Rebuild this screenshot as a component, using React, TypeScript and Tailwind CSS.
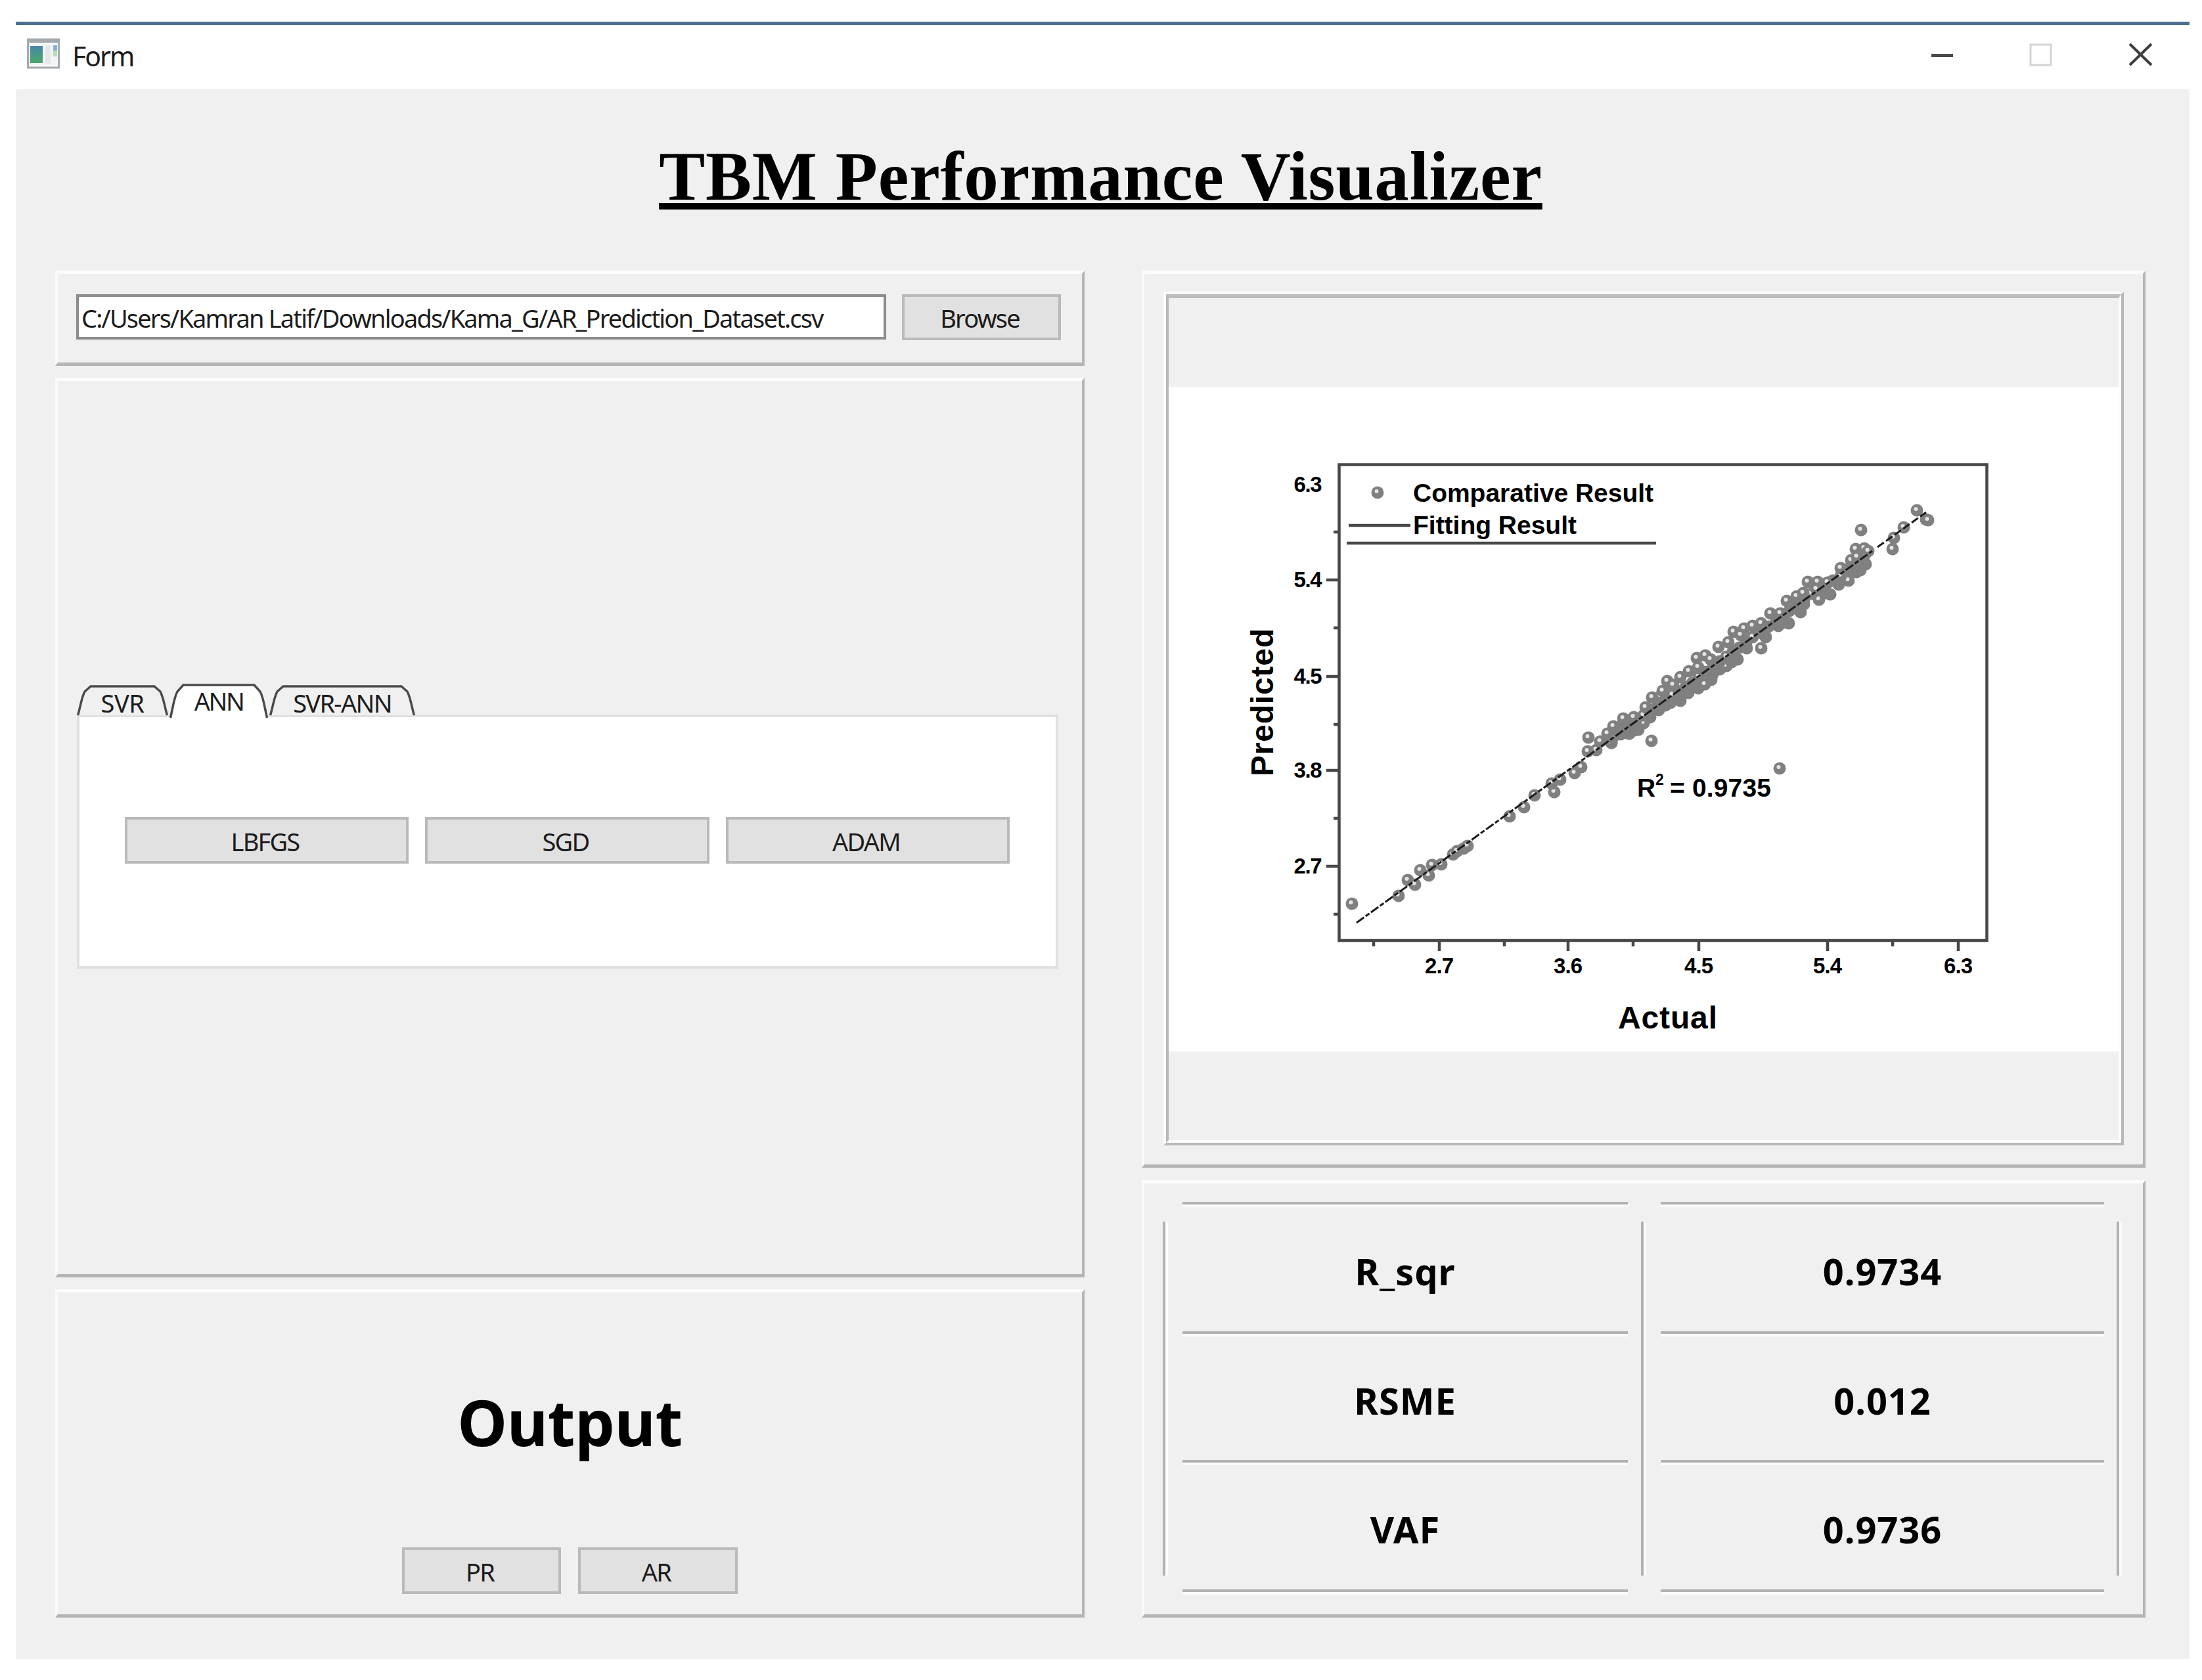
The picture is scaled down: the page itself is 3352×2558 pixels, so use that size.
import type { ReactNode } from "react";

const UI_FONT = "font-['Noto_Sans',sans-serif]";

function Panel({ className = "", children }: { className?: string; children?: ReactNode }) {
  return (
    <section
      className={`border-4 border-t-[5px] border-b-[5px] border-t-[#fcfcfc] border-l-[#fafafa] border-r-[#b4b4b4] border-b-[#b4b4b4] ${className}`}
    >
      {children}
    </section>
  );
}

function PushButton({ className = "", children }: { className?: string; children: ReactNode }) {
  return (
    <button
      className={`flex items-center justify-center border-4 border-[#bababa] bg-[#e1e1e1] pt-[2px] pr-[5px] text-[38px] leading-none tracking-[-1.8px] text-[#1c1c1c] ${className}`}
    >
      {children}
    </button>
  );
}

function Tab({ width, active = false, label, spacing }: { width: number; active?: boolean; label: string; spacing: string }) {
  const top = active ? 3 : 5;
  const bottom = active ? 53 : 49;
  const w = width;
  return (
    <div className="relative flex h-[52px] items-center justify-center" style={{ width }}>
      <svg className="absolute left-0 top-0 overflow-visible" width={w} height="54">
        <path
          d={`M1.5 ${bottom} C5 38 7 22 12 13 L21 ${top} H${w - 21} L${w - 12} 13 C${w - 7} 22 ${w - 5} 38 ${w - 1.5} ${bottom}`}
          fill={active ? "#ffffff" : "#f0f0f0"}
          stroke="#4a4a4a"
          strokeWidth="3.5"
        />
      </svg>
      <span className={`relative text-[38px] leading-none text-[#1c1c1c] ${spacing} ${active ? "pt-[1px]" : "pt-[7px]"}`}>{label}</span>
    </div>
  );
}

const POINTS: [number, number][] = [
  [2058, 1376], [2129, 1364], [2143, 1340], [2154, 1347], [2162, 1325], [2175, 1333], [2180, 1317], [2194, 1316],
  [2212, 1301], [2218, 1296], [2228, 1292], [2234, 1288], [2298, 1243], [2320, 1229], [2336, 1211], [2366, 1206],
  [2362, 1193], [2375, 1187], [2397, 1177], [2407, 1168], [2417, 1144], [2430, 1142], [2436, 1129], [2418, 1123],
  [2453, 1131], [2455, 1119], [2470, 1116], [2480, 1117], [2463, 1108], [2472, 1098], [2488, 1112],
  [2514, 1128], [2709, 1170], [2833, 807], [2881, 836], [2883, 819], [2898, 803], [2918, 777], [2932, 791], [2935, 792],
];

/* Lower and middle strands are painted first so the upper strand's highlights stay visible. */
const LOWER: [number, number][] = [
  [2453, 1131], [2467, 1118], [2480, 1117], [2494, 1111], [2502, 1101], [2512, 1092], [2525, 1081], [2535, 1074],
  [2543, 1070], [2558, 1067], [2570, 1055], [2585, 1048], [2595, 1042], [2605, 1035], [2607, 1027], [2618, 1019],
  [2628, 1014], [2636, 1008], [2645, 1004], [2659, 987], [2681, 987], [2688, 970], [2685, 966], [2707, 953],
  [2714, 948], [2723, 949], [2741, 932], [2746, 920], [2769, 913], [2779, 903], [2786, 905], [2799, 890],
  [2814, 884], [2826, 871], [2832, 868], [2840, 859],
];

const MIDDLE: [number, number][] = [
  [2455, 1123], [2466, 1114], [2478, 1106], [2490, 1098], [2502, 1089], [2514, 1081], [2524, 1074], [2536, 1065],
  [2546, 1058], [2556, 1053], [2566, 1046], [2576, 1040], [2586, 1031], [2596, 1023], [2608, 1014], [2618, 1007],
  [2628, 1000], [2638, 992], [2648, 986], [2658, 978], [2668, 970], [2680, 961], [2692, 954], [2704, 945],
  [2714, 939], [2724, 930], [2734, 922], [2746, 914], [2758, 904], [2768, 897], [2780, 889], [2790, 884],
  [2802, 877], [2812, 867], [2822, 859], [2832, 851], [2839, 844],
];

const UPPER: [number, number][] = [
  [2447, 1117], [2456, 1106], [2471, 1094], [2487, 1092], [2505, 1077], [2515, 1062], [2528, 1060], [2531, 1052],
  [2538, 1037], [2547, 1043], [2558, 1031], [2571, 1022], [2583, 1002], [2596, 998], [2585, 1016], [2616, 985],
  [2604, 1004], [2631, 978], [2639, 962], [2655, 957], [2650, 967], [2668, 953], [2681, 949], [2695, 934],
  [2710, 934], [2720, 915], [2735, 908], [2745, 903], [2752, 886], [2767, 886], [2765, 897], [2782, 887],
  [2802, 865], [2818, 853], [2825, 836], [2838, 835], [2844, 839], [2827, 848],
];

function Sphere({ x, y, shine = true }: { x: number; y: number; shine?: boolean }) {
  return (
    <g>
      <circle cx={x} cy={y} r="9.5" fill="#808080" />
      {shine && <circle cx={x - 1.5} cy={y - 2} r="3" fill="#e4e4e4" />}
    </g>
  );
}

const X_TICKS: [number, string][] = [[2191, "2.7"], [2387, "3.6"], [2586, "4.5"], [2782, "5.4"], [2981, "6.3"]];
const Y_TICKS: [number, string][] = [[883, "5.4"], [1030, "4.5"], [1173, "3.8"], [1319, "2.7"]];

function ScatterChart() {
  return (
    <svg
      viewBox="1779 589 1446 1012"
      width="1446"
      height="1012"
      className="block bg-white font-['Liberation_Sans',Arial,sans-serif] font-bold"
    >
      <g stroke="#484848" strokeWidth="4.5" fill="none">
        <rect x="2038.5" y="707.5" width="986" height="724.5" />
        {Y_TICKS.map(([y]) => <path key={y} d={`M2019 ${y}H2038`} />)}
        {[810, 956, 1103, 1246, 1392].map((y) => <path key={y} d={`M2030 ${y}H2038`} />)}
        {X_TICKS.map(([x]) => <path key={x} d={`M${x} 1432V1448`} />)}
        {[2091, 2290, 2486, 2881].map((x) => <path key={x} d={`M${x} 1432V1441`} />)}
        <path d="M2053 800H2147" />
        <path d="M2050 827H2521" />
      </g>
      <g fontSize="33" textAnchor="middle">
        {X_TICKS.map(([x, t]) => <text key={t} x={x} y="1482" textLength="44">{t}</text>)}
        <text x="1991" y="749" textLength="43">6.3</text>
        {Y_TICKS.map(([y, t]) => <text key={t} x="1991" y={y + 11} textLength="43">{t}</text>)}
      </g>
      <g fontSize="39">
        <text x="2151" y="764" textLength="366">Comparative Result</text>
        <text x="2151" y="813" textLength="249">Fitting Result</text>
        <text x="2492" y="1213">R</text>
        <text x="2520" y="1195" fontSize="23">2</text>
        <text x="2542" y="1213" textLength="154">= 0.9735</text>
      </g>
      <g fontSize="48">
        <text x="2463" y="1566" textLength="151">Actual</text>
        <text transform="translate(1938 1182) rotate(-90)" textLength="225">Predicted</text>
      </g>
      <Sphere x={2097} y={750} />
      {POINTS.map(([x, y], i) => <Sphere key={i} x={x} y={y} />)}
      {[...LOWER, ...MIDDLE].map(([x, y], i) => <Sphere key={i} x={x} y={y} shine={i % 4 === 0} />)}
      {UPPER.map(([x, y], i) => <Sphere key={i} x={x} y={y} />)}
      <path d="M2065 1405L2850 839" stroke="#1c1c1c" strokeWidth="3" strokeDasharray="14 3 7 3" />
      <path d="M2858 833L2932 780" stroke="#1c1c1c" strokeWidth="3" strokeDasharray="12 4" />
    </svg>
  );
}

function HRule() {
  return <div className="h-2 border-t-4 border-b-4 border-t-[#b2b2b2] border-b-[#fbfbfb]" />;
}

function VRule() {
  return <div className="mt-[30px] h-[539px] w-2 border-l-4 border-r-4 border-l-[#b2b2b2] border-r-[#fbfbfb]" />;
}

function MetricColumn({ values, className }: { values: string[]; className: string }) {
  return (
    <div className={`flex flex-col ${className}`}>
      <HRule />
      {values.map((v) => (
        <div key={v}>
          <div className="flex h-[188.5px] items-center justify-center pt-[6px] text-[56px] font-bold leading-none tracking-[0.9px]">{v}</div>
          <HRule />
        </div>
      ))}
    </div>
  );
}

function TitleBar() {
  return (
    <header className="flex h-[103px] items-start border-t-[5px] border-[#4d7090] bg-white">
      <svg className="ml-[17px] mt-[20px]" width="50" height="47" viewBox="0 0 50 47">
        <defs>
          <linearGradient id="pane" x1="0" y1="0" x2="0" y2="1">
            <stop offset="0" stopColor="#4a86a8" />
            <stop offset="1" stopColor="#48a868" />
          </linearGradient>
        </defs>
        <rect x="1.5" y="2" width="47" height="43" fill="#f4f5f6" stroke="#a4a9ad" strokeWidth="3" />
        <rect x="1" y="1" width="48" height="6" fill="#a4a9ad" />
        <rect x="5" y="12" width="19" height="26" fill="url(#pane)" />
        <rect x="28" y="11" width="8" height="28" fill="#e6e6e8" />
        <rect x="40" y="11" width="6" height="8" fill="#86b0d8" />
        <rect x="40" y="19" width="6" height="9" fill="#b6dfb2" />
      </svg>
      <span className="ml-[19px] mt-[27px] text-[41px] leading-none tracking-[-2px] text-[#1c1c1c]">Form</span>
      <svg className="ml-auto mr-[56px] mt-[25px]" width="338" height="40" viewBox="0 0 338 40" fill="none">
        <path d="M1 21.5H34" stroke="#4a4a4a" strokeWidth="5" />
        <rect x="152" y="5" width="31" height="31" stroke="#d4d4d4" strokeWidth="3" />
        <path d="M303 4L336 36M336 4L303 36" stroke="#3c3c3c" strokeWidth="4" />
      </svg>
    </header>
  );
}

export default function App() {
  return (
    <div className={`h-[2558px] w-[3352px] bg-white pl-6 pt-[33px] text-black ${UI_FONT}`}>
      <div className="h-[2493px] w-[3309px] bg-[#f0f0f0]">
        <TitleBar />
        <h1 className="flex h-[262px] items-center justify-center pr-[6px] pt-[2px] font-['Liberation_Serif',serif] text-[105px] font-bold leading-none tracking-[0.8px] underline decoration-[10px] underline-offset-[5px] [text-decoration-skip-ink:none]">
          TBM Performance Visualizer
        </h1>
        <main className="mt-[14px] flex gap-[87px] pl-[60px]">
          <div className="flex w-[1567px] flex-col gap-[18px]">
            <Panel className="flex h-[145px] gap-6 pl-7 pt-[31px]">
              <div className="flex h-[69px] w-[1233px] items-center whitespace-nowrap border-4 border-[#8c8c8c] bg-white pl-[4px] pt-[2px] text-[38px] leading-none tracking-[-1.82px] text-[#1c1c1c]">
                C:/Users/Kamran Latif/Downloads/Kama_G/AR_Prediction_Dataset.csv
              </div>
              <PushButton className="h-[70px] w-[242px]">Browse</PushButton>
            </Panel>
            <Panel className="h-[1370px] pl-[29px] pt-[460px]">
              <div className="relative flex h-[48px] gap-[2px]">
                <Tab width={139} label="SVR" spacing="tracking-[-0.5px]" />
                <Tab width={150} label="ANN" spacing="tracking-[-2.5px]" active />
                <Tab width={222} label="SVR-ANN" spacing="tracking-[-1.7px]" />
              </div>
              <div className="flex h-[387px] w-[1494px] items-start gap-[25px] border-4 border-[#e0e0e0] bg-white pl-[69px] pt-[152px]">
                <PushButton className="h-[71px] w-[432px]">LBFGS</PushButton>
                <PushButton className="h-[71px] w-[433px]">SGD</PushButton>
                <PushButton className="h-[71px] w-[432px]">ADAM</PushButton>
              </div>
            </Panel>
            <Panel className="flex h-[500px] flex-col items-center">
              <h2 className="mt-[149px] text-[96px] font-bold leading-none tracking-[-0.4px]">Output</h2>
              <div className="mt-[143px] flex gap-[26px]">
                <PushButton className="h-[71px] w-[242px]">PR</PushButton>
                <PushButton className="h-[71px] w-[243px]">AR</PushButton>
              </div>
            </Panel>
          </div>
          <div className="flex w-[1528px] flex-col gap-[19px]">
            <Panel className="h-[1366px] pl-[29px] pt-[27px]">
              <div className="h-[1300px] w-[1462px] border-4 border-t-[#fcfcfc] border-l-[#fcfcfc] border-r-[#b8b8b8] border-b-[#b8b8b8]">
                <div className="flex h-full items-center border-4 border-t-[6px] border-t-[#bcbcbc] border-l-[#b8b8b8] border-r-[#fcfcfc] border-b-[#fcfcfc]">
                  <ScatterChart />
                </div>
              </div>
            </Panel>
            <Panel className="flex h-[666px] pl-[28px] pt-[28px]">
              <VRule />
              <MetricColumn className="ml-[22px] w-[678px]" values={["R_sqr", "RSME", "VAF"]} />
              <div className="ml-[20px]"><VRule /></div>
              <MetricColumn className="ml-[22px] w-[675px]" values={["0.9734", "0.012", "0.9736"]} />
              <div className="ml-[19px]"><VRule /></div>
            </Panel>
          </div>
        </main>
      </div>
    </div>
  );
}
